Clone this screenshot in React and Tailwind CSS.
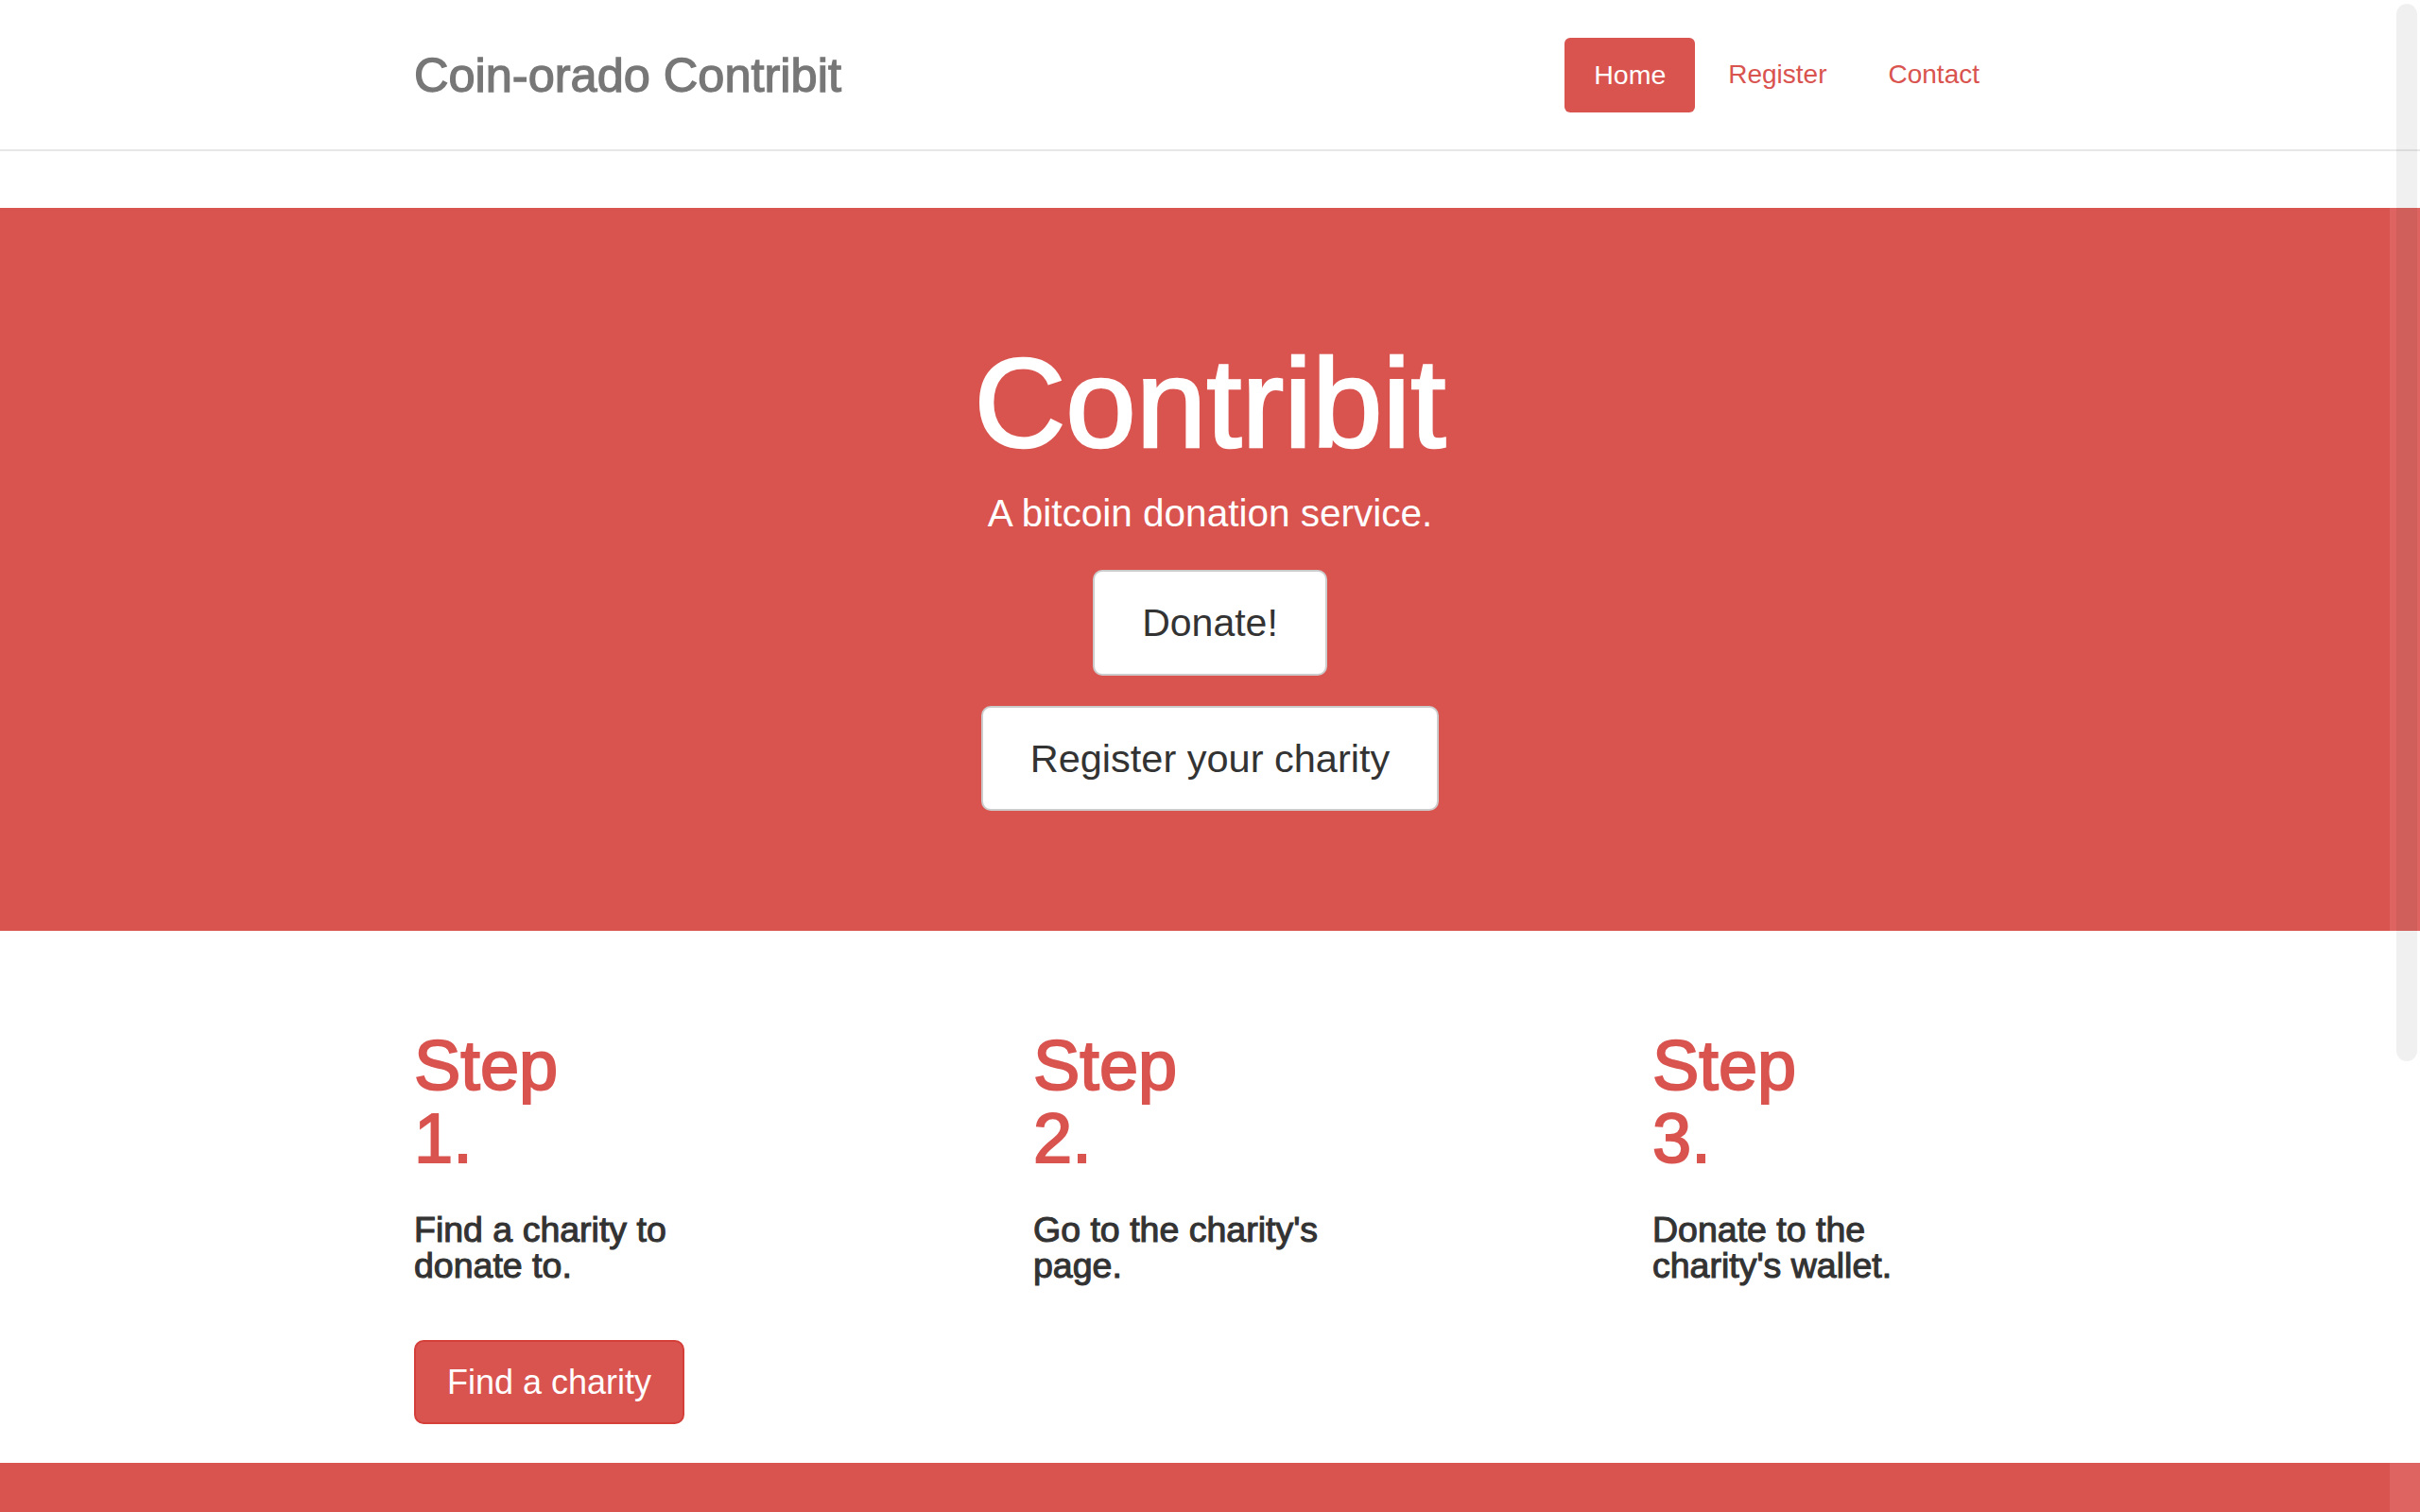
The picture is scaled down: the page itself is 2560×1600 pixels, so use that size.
export default function App() {
  return (
    <div className="relative h-[1600px] w-full overflow-hidden bg-white font-['Liberation_Sans',Arial,sans-serif] text-[#333]">
      {/* Navbar */}
      <header className="h-[160px] border-b-2 border-[#e7e7e7] bg-white">
        <div className="mx-auto flex h-[158px] w-[1684px] items-center justify-between">
          <a className="pt-[3px] text-[50.5px] leading-none text-[#777] [-webkit-text-stroke:1.3px_#777]">
            Coin-orado Contribit
          </a>
          <nav className="mr-[-2px] flex items-center gap-[3px] text-[28px] leading-none">
            <a className="flex h-[79px] items-center rounded-[6px] bg-[#d9534f] px-[31px] text-[28.5px] text-white">Home</a>
            <a className="flex h-[79px] items-center px-[32px] text-[#d9534f]">Register</a>
            <a className="flex h-[79px] items-center px-[30px] text-[#d9534f]">Contact</a>
          </nav>
        </div>
      </header>

      {/* Hero */}
      <section className="mt-[60px] flex h-[765px] flex-col items-center bg-[#d9534f] pt-[140px] text-white">
        <h1 className="text-[134px] leading-none [-webkit-text-stroke:2.6px_#fff]">Contribit</h1>
        <p className="mt-[21px] text-[40.5px] leading-[56px]">A bitcoin donation service.</p>
        <a className="mt-[32px] flex h-[112px] items-center rounded-[10px] border-2 border-[#ccc] bg-white px-[50px] text-[41px] leading-none text-[#333]">
          Donate!
        </a>
        <a className="mt-[32px] flex h-[111px] items-center rounded-[10px] border-2 border-[#ccc] bg-white px-[50px] text-[41.5px] leading-none text-[#333]">
          Register your charity
        </a>
      </section>

      {/* Steps */}
      <section className="h-[563px] pt-[104px]">
        <div className="ml-[438px] grid grid-cols-[655px_655px_655px]">
          <div>
            <h2 className="text-[74px] leading-[77px] text-[#d9534f] [-webkit-text-stroke:2px_#d9534f]">
              <span className="block">Step</span>
              <span className="block">1.</span>
            </h2>
            <p className="mt-[39px] w-[340px] text-[37.5px] leading-[38px] [-webkit-text-stroke:1.1px_#333]">
              Find a charity to donate to.
            </p>
            <a className="mt-[60px] inline-flex h-[89px] items-center rounded-[10px] border-2 border-[#d43f3a] bg-[#d9534f] px-[33px] text-[36px] leading-none text-white">
              Find a charity
            </a>
          </div>
          <div>
            <h2 className="text-[74px] leading-[77px] text-[#d9534f] [-webkit-text-stroke:2px_#d9534f]">
              <span className="block">Step</span>
              <span className="block">2.</span>
            </h2>
            <p className="mt-[39px] w-[340px] text-[37.5px] leading-[38px] [-webkit-text-stroke:1.1px_#333]">
              Go to the charity's page.
            </p>
          </div>
          <div>
            <h2 className="text-[74px] leading-[77px] text-[#d9534f] [-webkit-text-stroke:2px_#d9534f]">
              <span className="block">Step</span>
              <span className="block">3.</span>
            </h2>
            <p className="mt-[39px] w-[340px] text-[37.5px] leading-[38px] [-webkit-text-stroke:1.1px_#333]">
              Donate to the charity's wallet.
            </p>
          </div>
        </div>
      </section>

      {/* Footer band */}
      <footer className="h-[52px] bg-[#d9534f]" />

      {/* Overlay scrollbar */}
      <div className="absolute right-0 top-0 h-full w-[32px] bg-white/10">
        <div className="absolute left-[7px] top-[4px] h-[1119px] w-[22px] rounded-full bg-black/[0.06]" />
      </div>
    </div>
  );
}
